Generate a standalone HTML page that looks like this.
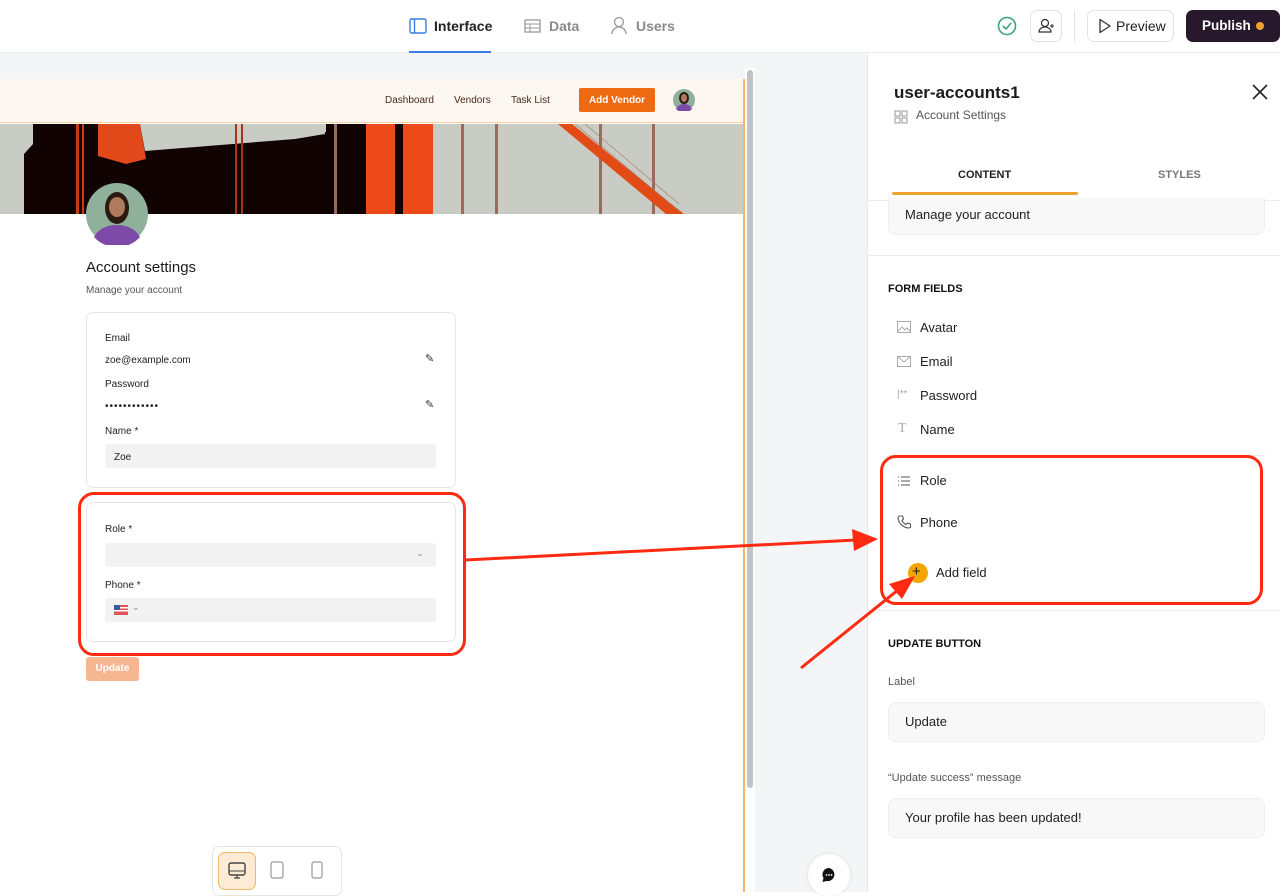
<!DOCTYPE html>
<html><head><meta charset="utf-8">
<style>
*{box-sizing:border-box;margin:0;padding:0}
body{width:1281px;height:892px;overflow:hidden;font-family:"Liberation Sans",sans-serif;background:#fff;position:relative;color:#1a1a1a}
.abs{position:absolute}
.top{left:0;top:0;width:1281px;height:53px;background:#fff;border-bottom:1px solid #ececef}
.tab{top:18px;font-size:14px;color:#8a8a8f;font-weight:bold}
.canvas{left:0;top:53px;width:867px;height:839px;background:#f4f5f7}
.panel{left:867px;top:53px;width:414px;height:839px;background:#fff;border-left:1px solid #e8e8ec}
.lbl{font-size:10px;color:#222}
.inp{background:#f2f2f2;border-radius:3px}
.pin{background:#f8f8f9;border:1px solid #eeeef0;border-radius:8px;font-size:13px;color:#222;padding-left:16px}
.fi{font-size:13px;color:#222}
</style></head><body>
<div class="abs top">
  <svg class="abs" style="left:409px;top:18px" width="18" height="16"><rect x="1" y="1" width="16" height="14" rx="1.5" fill="none" stroke="#3b7de0" stroke-width="1.4"/><line x1="5.5" y1="1" x2="5.5" y2="15" stroke="#3b7de0" stroke-width="1.4"/></svg>
  <div class="abs tab" style="left:434px;color:#222">Interface</div>
  <div class="abs" style="left:409px;top:51px;width:82px;height:3px;background:#3b7de0"></div>
  <svg class="abs" style="left:524px;top:19px" width="17" height="14"><rect x="1" y="1" width="15" height="12" fill="none" stroke="#999" stroke-width="1.3"/><line x1="1" y1="5" x2="16" y2="5" stroke="#999"/><line x1="1" y1="9" x2="16" y2="9" stroke="#999"/><line x1="6" y1="5" x2="6" y2="13" stroke="#999"/></svg>
  <div class="abs tab" style="left:549px">Data</div>
  <svg class="abs" style="left:610px;top:16px" width="18" height="19"><circle cx="9" cy="6" r="4.5" fill="none" stroke="#999" stroke-width="1.3"/><path d="M2 18c0-4 3-7 7-7s7 3 7 7" fill="none" stroke="#999" stroke-width="1.3"/></svg>
  <div class="abs tab" style="left:636px">Users</div>
  <svg class="abs" style="left:997px;top:16px" width="20" height="20"><circle cx="10" cy="10" r="8.5" fill="none" stroke="#3aa57a" stroke-width="1.6"/><path d="M6 10l3 3 5-6" fill="none" stroke="#3aa57a" stroke-width="1.6"/></svg>
  <div class="abs" style="left:1030px;top:10px;width:32px;height:32px;border:1px solid #e2e2e6;border-radius:7px"></div>
  <svg class="abs" style="left:1038px;top:18px" width="18" height="16"><circle cx="7" cy="5" r="3.5" fill="none" stroke="#333" stroke-width="1.2"/><path d="M1 14c0-3 3-5 6-5s6 2 6 5z" fill="none" stroke="#333" stroke-width="1.2"/><path d="M14 6v4M12 8h4" stroke="#333" stroke-width="1.1"/></svg>
  <div class="abs" style="left:1074px;top:10px;width:1px;height:32px;background:#e2e2e6"></div>
  <div class="abs" style="left:1087px;top:10px;width:87px;height:32px;border:1px solid #e2e2e6;border-radius:7px"></div>
  <svg class="abs" style="left:1098px;top:18px" width="14" height="16"><path d="M2 1.5v13l10-6.5z" fill="none" stroke="#333" stroke-width="1.3" stroke-linejoin="round"/></svg>
  <div class="abs" style="left:1116px;top:18px;font-size:14px;color:#222">Preview</div>
  <div class="abs" style="left:1186px;top:10px;width:94px;height:32px;background:#27192b;border-radius:7px"></div>
  <div class="abs" style="left:1202px;top:18px;font-size:13.5px;color:#fff;font-weight:bold">Publish</div>
  <div class="abs" style="left:1256px;top:22px;width:8px;height:8px;border-radius:50%;background:#f0a030"></div>
</div>

<div class="abs canvas"></div>
<div class="abs" style="left:0;top:79px;width:745px;height:813px;background:#fff;border-right:2px solid #f0b868"></div>
<div class="abs" style="left:745px;top:68px;width:10px;height:824px;background:#fff"></div>
<div class="abs" style="left:747px;top:70px;width:6px;height:718px;background:#c3c3c3;border-radius:3px"></div>
<div class="abs" style="left:0;top:79px;width:743px;height:44px;background:#fdf7f1;border-bottom:1px solid #f3cf9e"></div>
<div class="abs" style="left:385px;top:95px;font-size:10px;color:#4a2a1a">Dashboard</div>
<div class="abs" style="left:454px;top:95px;font-size:10px;color:#4a2a1a">Vendors</div>
<div class="abs" style="left:511px;top:95px;font-size:10px;color:#4a2a1a">Task List</div>
<div class="abs" style="left:579px;top:88px;width:76px;height:24px;background:#ee6a10;border-radius:2px;color:#fff;font-size:10px;font-weight:bold;text-align:center;padding-top:7px">Add Vendor</div>
<svg class="abs" style="left:673px;top:89px" width="22" height="22"><circle cx="11" cy="11" r="11" fill="#8fb09a"/><ellipse cx="11" cy="9" rx="5" ry="6" fill="#2a1a12"/><ellipse cx="11" cy="9" rx="3" ry="4" fill="#b07a5c"/><path d="M3 20c2-4 5-5 8-5s6 1 8 5a11 11 0 0 1-16 0z" fill="#7e4aa8"/></svg>

<svg class="abs" style="left:0;top:124px" width="743" height="90">
  <rect width="743" height="90" fill="#c8ccc4"/>
  <path d="M24 90V30L33 20V0h265l6 8 22 0 0 -8h40v90z" fill="#120303"/>
  <path d="M140 0h185v10l-30 5-150 12z" fill="#c8ccc4"/>
  <path d="M98 0h42l6 35 -20 5 -28-8z" fill="#e2491a"/>
  <rect x="76" y="0" width="3" height="90" fill="#c83a14"/><rect x="82" y="0" width="2" height="90" fill="#c83a14"/>
  <rect x="235" y="0" width="2" height="90" fill="#a83414"/><rect x="241" y="0" width="2" height="90" fill="#a83414"/>
  <rect x="366" y="0" width="29" height="90" fill="#ec4a18"/><rect x="395" y="0" width="8" height="90" fill="#120303"/><rect x="403" y="0" width="30" height="90" fill="#ec4a18"/>
  <rect x="334" y="0" width="3" height="90" fill="#9a6a5a"/><rect x="461" y="0" width="3" height="90" fill="#9a6a5a"/><rect x="495" y="0" width="3" height="90" fill="#9a6a5a"/><rect x="599" y="0" width="3" height="90" fill="#9a6a5a"/><rect x="652" y="0" width="3" height="90" fill="#9a6a5a"/>
  <path d="M558 0h14l112 90h-18z" fill="#e24a16"/>
  <path d="M575 0l105 88M585 0l94 80" stroke="#a07a6a" stroke-width="0.6"/>
</svg>
<svg class="abs" style="left:86px;top:183px" width="62" height="62"><circle cx="31" cy="31" r="31" fill="#8fb09a"/><ellipse cx="31" cy="25" rx="12" ry="16" fill="#2a1a12"/><ellipse cx="31" cy="24" rx="8" ry="10" fill="#b07a5c"/><path d="M8 54c5-9 14-12 23-12s18 3 23 12a31 31 0 0 1-46 0z" fill="#7e4aa8"/></svg>
<div class="abs" style="left:86px;top:259px;font-size:15px;color:#1a1a1a">Account settings</div>
<div class="abs" style="left:86px;top:285px;font-size:10px;color:#555">Manage your account</div>

<div class="abs" style="left:86px;top:312px;width:370px;height:176px;border:1px solid #e6e6e6;border-radius:7px"></div>
<div class="abs lbl" style="left:105px;top:333px">Email</div>
<div class="abs lbl" style="left:105px;top:355px">zoe@example.com</div>
<div class="abs" style="left:425px;top:352px;font-size:11px;color:#333">✎</div>
<div class="abs lbl" style="left:105px;top:379px">Password</div>
<div class="abs lbl" style="left:105px;top:401px;letter-spacing:1px">••••••••••••</div>
<div class="abs" style="left:425px;top:398px;font-size:11px;color:#333">✎</div>
<div class="abs lbl" style="left:105px;top:426px">Name *</div>
<div class="abs inp" style="left:105px;top:444px;width:331px;height:24px"></div>
<div class="abs lbl" style="left:114px;top:452px">Zoe</div>

<div class="abs" style="left:86px;top:502px;width:370px;height:140px;border:1px solid #e6e6e6;border-radius:7px"></div>
<div class="abs lbl" style="left:105px;top:524px">Role *</div>
<div class="abs inp" style="left:105px;top:543px;width:331px;height:24px"></div>
<div class="abs" style="left:416px;top:548px;font-size:9px;color:#888">⌄</div>
<div class="abs lbl" style="left:105px;top:580px">Phone *</div>
<div class="abs inp" style="left:105px;top:598px;width:331px;height:24px"></div>
<svg class="abs" style="left:114px;top:605px" width="14" height="10"><rect width="14" height="10" fill="#d55"/><rect y="2" width="14" height="1.5" fill="#fff"/><rect y="5" width="14" height="1.5" fill="#fff"/><rect width="6" height="5" fill="#3a5aa8"/></svg>
<div class="abs" style="left:132px;top:602px;font-size:9px;color:#888">⌄</div>
<div class="abs" style="left:78px;top:492px;width:388px;height:164px;border:3px solid #ff2a12;border-radius:16px"></div>
<div class="abs" style="left:86px;top:657px;width:53px;height:24px;background:#f6b690;border-radius:3px;color:#fff;font-size:10px;font-weight:bold;text-align:center;padding-top:6px">Update</div>

<div class="abs" style="left:212px;top:846px;width:130px;height:50px;background:#fff;border:1px solid #e6e6e6;border-radius:7px"></div>
<div class="abs" style="left:218px;top:852px;width:38px;height:38px;background:#fdebd6;border:1px solid #f0b868;border-radius:7px"></div>
<svg class="abs" style="left:228px;top:862px" width="18" height="18"><rect x="1" y="1" width="16" height="12" rx="2" fill="none" stroke="#444" stroke-width="1.4"/><line x1="1" y1="9" x2="17" y2="9" stroke="#444"/><path d="M9 13v3M6 16h6" stroke="#444" stroke-width="1.3"/></svg>
<svg class="abs" style="left:270px;top:861px" width="14" height="18"><rect x="1" y="1" width="12" height="16" rx="2" fill="none" stroke="#999" stroke-width="1.2"/></svg>
<svg class="abs" style="left:311px;top:861px" width="12" height="18"><rect x="1" y="1" width="10" height="16" rx="2" fill="none" stroke="#999" stroke-width="1.2"/></svg>
<div class="abs" style="left:808px;top:854px;width:42px;height:42px;background:#fff;border-radius:50%;box-shadow:0 0 4px rgba(0,0,0,.1)"></div>
<svg class="abs" style="left:821px;top:867px" width="16" height="16"><path d="M8 1a6.5 6.5 0 0 0-5.5 10L1.5 15l4-1A6.5 6.5 0 1 0 8 1z" fill="#111"/><circle cx="5.5" cy="8" r=".9" fill="#fff"/><circle cx="8" cy="8" r=".9" fill="#fff"/><circle cx="10.5" cy="8" r=".9" fill="#fff"/></svg>

<div class="abs panel"></div>
<div class="abs" style="left:894px;top:83px;font-size:17px;font-weight:bold;color:#1a1a1a">user-accounts1</div>
<svg class="abs" style="left:894px;top:110px" width="14" height="14"><g fill="none" stroke="#999"><rect x="1" y="1" width="5" height="5"/><rect x="8" y="1" width="5" height="5"/><rect x="1" y="8" width="5" height="5"/><rect x="8" y="8" width="5" height="5"/></g></svg>
<div class="abs" style="left:916px;top:108px;font-size:12px;color:#555">Account Settings</div>
<svg class="abs" style="left:1251px;top:83px" width="18" height="18"><path d="M2 2l14 14M16 2L2 16" stroke="#222" stroke-width="1.6"/></svg>
<div class="abs" style="left:958px;top:169px;font-size:11px;font-weight:bold;color:#222">CONTENT</div>
<div class="abs" style="left:1158px;top:169px;font-size:11px;font-weight:bold;color:#777">STYLES</div>
<div class="abs" style="left:892px;top:192px;width:186px;height:3px;background:#f0a030;border-radius:2px"></div>
<div class="abs" style="left:868px;top:200px;width:413px;height:1px;background:#ececef"></div>
<div class="abs pin" style="left:888px;top:198px;width:377px;height:37px;line-height:34px;border-top:none;border-radius:0 0 8px 8px">Manage your account</div>
<div class="abs" style="left:868px;top:255px;width:413px;height:1px;background:#ececef"></div>
<div class="abs" style="left:888px;top:283px;font-size:11px;font-weight:bold;color:#111">FORM FIELDS</div>
<svg class="abs" style="left:897px;top:321px" width="14" height="12"><rect x=".5" y=".5" width="13" height="11" fill="none" stroke="#aaa"/><path d="M1 10l4-4 3 3 2-2 3 3" fill="none" stroke="#aaa"/></svg>
<div class="abs fi" style="left:920px;top:320px">Avatar</div>
<svg class="abs" style="left:897px;top:356px" width="14" height="11"><rect x=".5" y=".5" width="13" height="10" fill="none" stroke="#aaa"/><path d="M1 1l6 5 6-5" fill="none" stroke="#aaa"/></svg>
<div class="abs fi" style="left:920px;top:354px">Email</div>
<div class="abs" style="left:897px;top:389px;font-size:10px;color:#aaa">|**</div>
<div class="abs fi" style="left:920px;top:388px">Password</div>
<div class="abs" style="left:898px;top:421px;font-size:14px;color:#aaa;font-family:'Liberation Serif',serif">T</div>
<div class="abs fi" style="left:920px;top:422px">Name</div>
<div class="abs" style="left:888px;top:455px;width:377px;height:1px;background:#ececef"></div>
<svg class="abs" style="left:897px;top:475px" width="14" height="12"><g stroke="#555" stroke-width="1.1"><path d="M1 2h1M1 6h1M1 10h1M4 2h9M4 6h9M4 10h9"/></g></svg>
<div class="abs fi" style="left:920px;top:473px">Role</div>
<svg class="abs" style="left:897px;top:515px" width="14" height="14"><path d="M3 1l2.5 0 1 3-1.5 1.5c1 2 2 3 4 4L10.5 8l3 1v2.5c0 1-1 1.5-2 1.5C6 12.5 1.5 8 1 3 1 2 2 1 3 1z" fill="none" stroke="#555" stroke-width="1.1"/></svg>
<div class="abs fi" style="left:920px;top:515px">Phone</div>
<div class="abs" style="left:908px;top:563px;width:20px;height:20px;border-radius:50%;background:#f5a500"></div>
<div class="abs" style="left:912px;top:563px;font-size:15px;color:#222">+</div>
<div class="abs fi" style="left:936px;top:565px">Add field</div>
<div class="abs" style="left:880px;top:455px;width:383px;height:150px;border:3px solid #ff2a12;border-radius:16px"></div>
<div class="abs" style="left:868px;top:610px;width:413px;height:1px;background:#ececef"></div>
<div class="abs" style="left:888px;top:638px;font-size:11px;font-weight:bold;color:#111">UPDATE BUTTON</div>
<div class="abs" style="left:888px;top:676px;font-size:11px;color:#555">Label</div>
<div class="abs pin" style="left:888px;top:702px;width:377px;height:40px;line-height:38px">Update</div>
<div class="abs" style="left:888px;top:772px;font-size:11px;color:#555">“Update success” message</div>
<div class="abs pin" style="left:888px;top:798px;width:377px;height:40px;line-height:38px">Your profile has been updated!</div>

<svg class="abs" style="left:0;top:0" width="1281" height="892">
  <line x1="466" y1="560" x2="856" y2="540" stroke="#ff2a12" stroke-width="3"/>
  <path d="M878 539l-26-10 2 22z" fill="#ff2a12"/>
  <line x1="801" y1="668" x2="898" y2="590" stroke="#ff2a12" stroke-width="3"/>
  <path d="M915 576l-26 8 13 15z" fill="#ff2a12"/>
</svg>
</body></html>
